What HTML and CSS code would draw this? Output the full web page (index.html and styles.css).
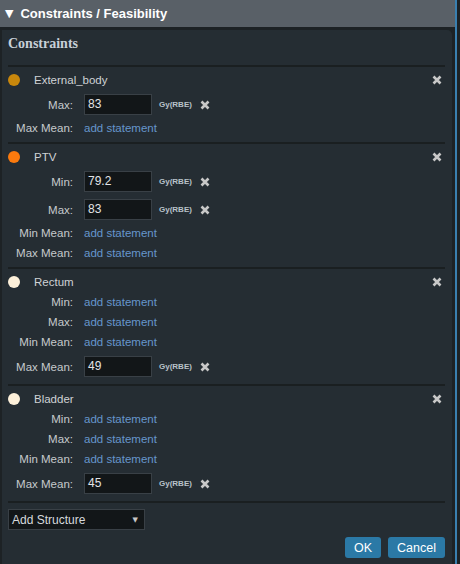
FILE: index.html
```html
<!DOCTYPE html>
<html>
<head>
<meta charset="utf-8">
<link rel="stylesheet" href="styles.css">
</head>
<body>
<div class="frame">
  <div class="titlebar"><span class="tri">▼</span><span>Constraints / Feasibility</span></div>
  <div class="panel">
    <h2 class="heading">Constraints</h2>
    <div class="sep"></div>

    <div class="struct">
      <div class="name-row">
        <span class="dot" style="background:#c8870c"></span>
        <span class="name">External_body</span>
        <svg class="x big" viewBox="0 0 10 10"><path d="M1.5 1.5L8.5 8.5M8.5 1.5L1.5 8.5"/></svg>
      </div>
      <div class="row inp"><span class="lbl">Max:</span><span class="field">83</span><span class="unit">Gy(RBE)</span><svg class="x" viewBox="0 0 10 10"><path d="M1.5 1.5L8.5 8.5M8.5 1.5L1.5 8.5"/></svg></div>
      <div class="row"><span class="lbl">Max Mean:</span><a class="link">add statement</a></div>
    </div>

    <div class="struct">
      <div class="name-row">
        <span class="dot" style="background:#fb7a0e"></span>
        <span class="name">PTV</span>
        <svg class="x big" viewBox="0 0 10 10"><path d="M1.5 1.5L8.5 8.5M8.5 1.5L1.5 8.5"/></svg>
      </div>
      <div class="row inp"><span class="lbl">Min:</span><span class="field">79.2</span><span class="unit">Gy(RBE)</span><svg class="x" viewBox="0 0 10 10"><path d="M1.5 1.5L8.5 8.5M8.5 1.5L1.5 8.5"/></svg></div>
      <div class="row inp"><span class="lbl">Max:</span><span class="field">83</span><span class="unit">Gy(RBE)</span><svg class="x" viewBox="0 0 10 10"><path d="M1.5 1.5L8.5 8.5M8.5 1.5L1.5 8.5"/></svg></div>
      <div class="row"><span class="lbl">Min Mean:</span><a class="link">add statement</a></div>
      <div class="row"><span class="lbl">Max Mean:</span><a class="link">add statement</a></div>
    </div>

    <div class="struct">
      <div class="name-row">
        <span class="dot" style="background:#fdf0da"></span>
        <span class="name">Rectum</span>
        <svg class="x big" viewBox="0 0 10 10"><path d="M1.5 1.5L8.5 8.5M8.5 1.5L1.5 8.5"/></svg>
      </div>
      <div class="row"><span class="lbl">Min:</span><a class="link">add statement</a></div>
      <div class="row"><span class="lbl">Max:</span><a class="link">add statement</a></div>
      <div class="row"><span class="lbl">Min Mean:</span><a class="link">add statement</a></div>
      <div class="row inp"><span class="lbl">Max Mean:</span><span class="field">49</span><span class="unit">Gy(RBE)</span><svg class="x" viewBox="0 0 10 10"><path d="M1.5 1.5L8.5 8.5M8.5 1.5L1.5 8.5"/></svg></div>
    </div>

    <div class="struct">
      <div class="name-row">
        <span class="dot" style="background:#fdf0da"></span>
        <span class="name">Bladder</span>
        <svg class="x big" viewBox="0 0 10 10"><path d="M1.5 1.5L8.5 8.5M8.5 1.5L1.5 8.5"/></svg>
      </div>
      <div class="row"><span class="lbl">Min:</span><a class="link">add statement</a></div>
      <div class="row"><span class="lbl">Max:</span><a class="link">add statement</a></div>
      <div class="row"><span class="lbl">Min Mean:</span><a class="link">add statement</a></div>
      <div class="row inp"><span class="lbl">Max Mean:</span><span class="field">45</span><span class="unit">Gy(RBE)</span><svg class="x" viewBox="0 0 10 10"><path d="M1.5 1.5L8.5 8.5M8.5 1.5L1.5 8.5"/></svg></div>
    </div>

    <div class="select"><span>Add Structure</span><span class="caret">▼</span></div>
    <div class="actions">
      <button class="btn">OK</button>
      <button class="btn">Cancel</button>
    </div>
  </div>
</div>
</body>
</html>
```

FILE: styles.css
```css
html, body {
  margin: 0;
  padding: 0;
  background: #1d2225;
  width: 460px;
  height: 564px;
  overflow: hidden;
  font-family: "Liberation Sans", Arial, sans-serif;
}
.frame {
  width: 455px;
  height: 564px;
  border-right: 2px solid #3a80b0;
  display: flex;
  flex-direction: column;
}
.titlebar {
  height: 27px;
  background: #596067;
  color: #ffffff;
  font-weight: bold;
  font-size: 13px;
  display: flex;
  align-items: center;
  padding-left: 5px;
  box-sizing: border-box;
}
.tri {
  font-size: 11px;
  margin-right: 7px;
  font-family: "DejaVu Sans", sans-serif;
}
.panel {
  flex: 1;
  margin: 3px 3px 0 2px;
  background: #252d33;
  border-radius: 0 5px 0 0;
  padding: 3px 7px 0 6px;
}
.heading {
  margin: 0;
  font-family: "Liberation Serif", "Times New Roman", serif;
  font-weight: bold;
  font-size: 14px;
  line-height: 22px;
  color: #c8d0d8;
}
.sep {
  height: 2px;
  background: #1a1f21;
  margin-top: 10px;
}
.struct {
  padding: 3px 0 4px;
  border-bottom: 2px solid #1a1f21;
}
.name-row {
  display: flex;
  align-items: center;
  height: 20px;
}
.dot {
  width: 12px;
  height: 12px;
  border-radius: 50%;
  margin-right: 14px;
}
.name {
  flex: 1;
  color: #cfd2d5;
  font-size: 11.5px;
}
.row {
  display: flex;
  align-items: center;
  height: 20px;
  font-size: 11.5px;
}
.row.inp {
  height: 28px;
  box-sizing: border-box;
  padding: 4px 0 3px;
}
.lbl {
  width: 65px;
  text-align: right;
  margin-right: 11px;
  color: #c6cacd;
}
.link {
  color: #6596cc;
}
.field {
  width: 68px;
  height: 21px;
  box-sizing: border-box;
  background: #121618;
  border: 1px solid #394046;
  color: #e2e4e6;
  font-size: 12px;
  line-height: 19px;
  padding-left: 3px;
}
.unit {
  font-size: 8px;
  font-weight: bold;
  color: #b9c2ca;
  margin-left: 7px;
  margin-right: 8px;
}
.x {
  width: 10px;
  height: 10px;
  fill: none;
  stroke: #c8c8c8;
  stroke-width: 2.6;
}
.x.big {
  margin-right: 3px;
}
.select {
  margin-top: 6px;
  width: 137px;
  height: 21px;
  box-sizing: border-box;
  background: #121618;
  border: 1px solid #394046;
  color: #d6d9dc;
  font-size: 12px;
  display: flex;
  align-items: center;
  justify-content: space-between;
  padding: 0 6px 0 3px;
}
.caret {
  font-size: 7px;
  color: #c8c8c8;
  font-family: "DejaVu Sans", sans-serif;
}
.actions {
  display: flex;
  justify-content: flex-end;
  gap: 7px;
  margin-top: 7px;
}
.btn {
  height: 21px;
  padding: 0 9px;
  background: #2b79a6;
  color: #ffffff;
  border: none;
  border-radius: 3px;
  font-family: "Liberation Sans", Arial, sans-serif;
  font-size: 12.5px;
}
```
